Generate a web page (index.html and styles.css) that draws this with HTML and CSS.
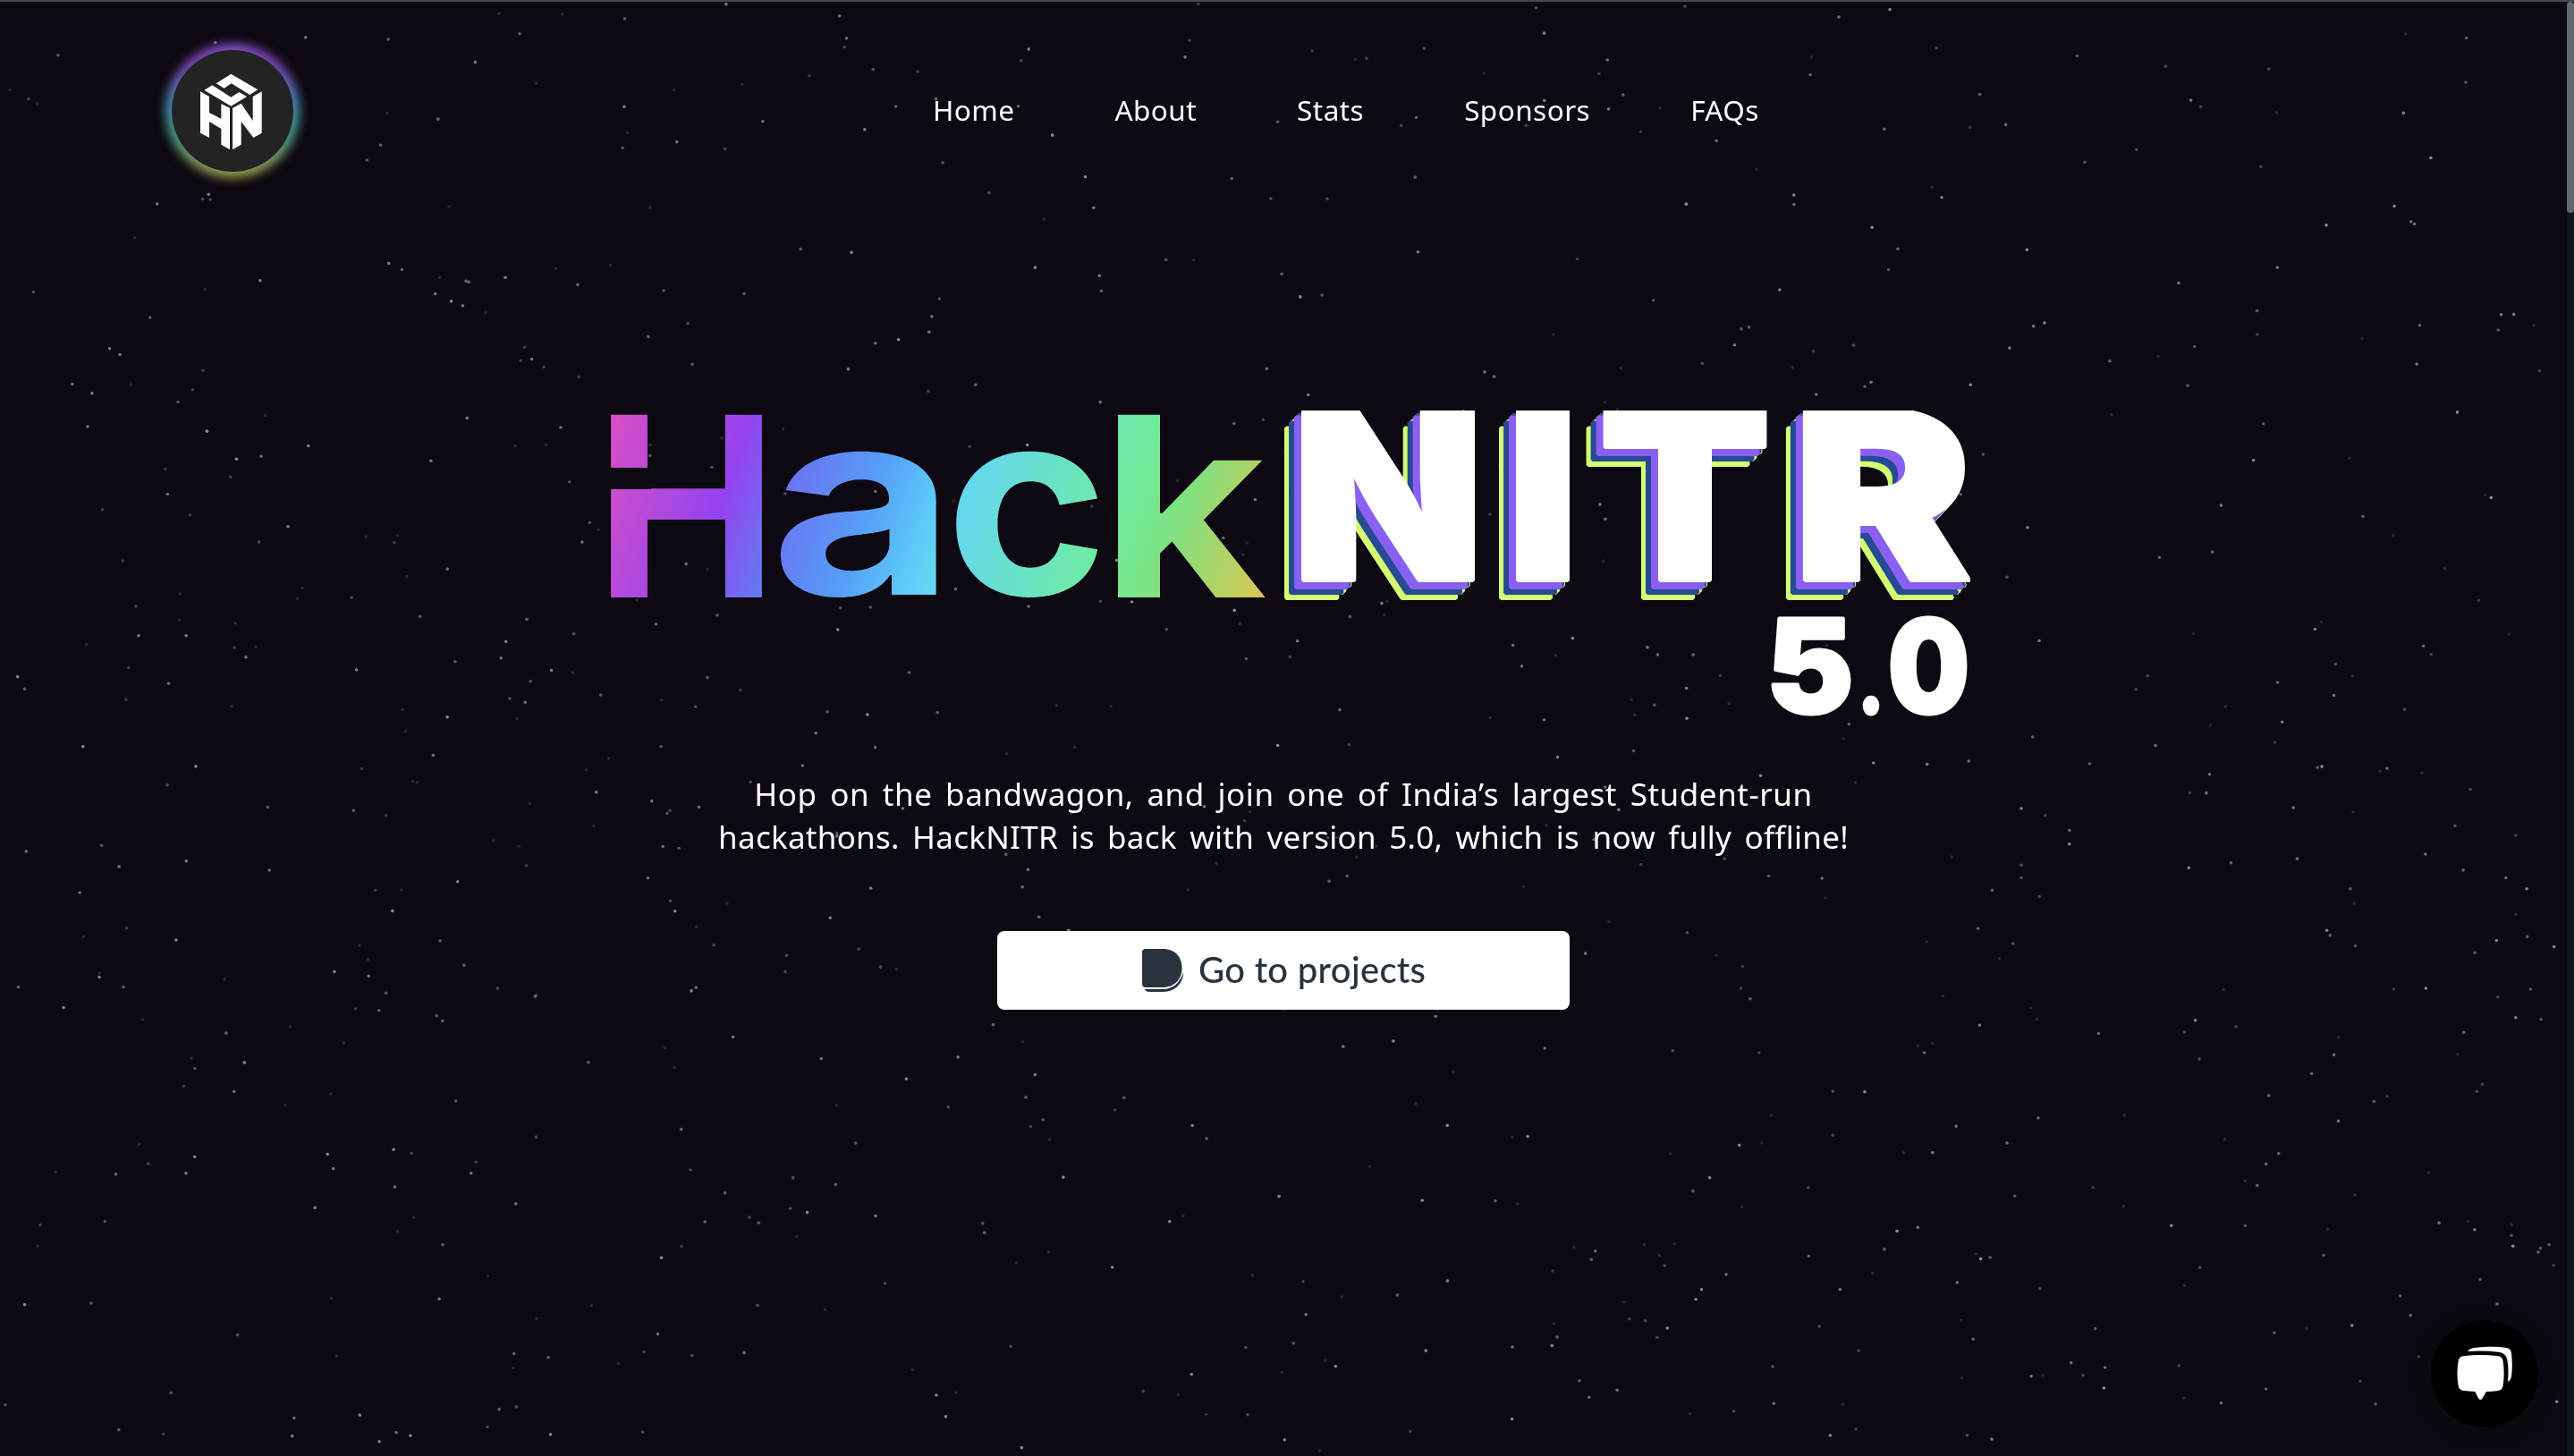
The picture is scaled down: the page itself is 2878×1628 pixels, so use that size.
FILE: index.html
```html
<!DOCTYPE html>
<html lang="en">
<head>
<meta charset="utf-8">
<title>HackNITR 5.0</title>
<link rel="stylesheet" href="styles.css">
</head>
<body>
<canvas class="stars" id="stars" width="2870" height="1628" aria-hidden="true"></canvas>
<div class="page">
  <header class="header">
    <a class="brand" href="#home" aria-label="HackNITR">
      <svg viewBox="96 78 408 408" fill="#fff">
        <path d="M295 158 385 211 358 228 296 190 272 206 245 190Z"/>
        <path d="M232 196 295 236 322 219 348 234 295 266 205 212Z"/>
        <path d="M192 217 222 234V288L262 308V258L291 272V412L262 395V342L222 318V372L192 356Z"/>
        <path d="M300 272 329 257 368 315V234L398 217V356L370 372 329 318V395L300 412Z"/>
      </svg>
    </a>
    <nav class="nav">
      <a href="#home">Home</a>
      <a href="#about">About</a>
      <a href="#stats">Stats</a>
      <a href="#sponsors">Sponsors</a>
      <a href="#faqs">FAQs</a>
    </nav>
  </header>

  <main class="hero">
    <svg class="wordmark" viewBox="667 450 1536 360" role="img" aria-label="HackNITR 5.0">
      <defs>
        <linearGradient id="rainbow" gradientUnits="userSpaceOnUse" x1="683" y1="464" x2="1393" y2="712">
          <stop offset="0" stop-color="#d850c6"/>
          <stop offset=".2" stop-color="#9343ef"/>
          <stop offset=".28" stop-color="#6b72f3"/>
          <stop offset=".41" stop-color="#569ff7"/>
          <stop offset=".5" stop-color="#5ecdf8"/>
          <stop offset=".54" stop-color="#64d8ee"/>
          <stop offset=".7" stop-color="#6ce6b5"/>
          <stop offset=".76" stop-color="#6eeca0"/>
          <stop offset=".84" stop-color="#7ee283"/>
          <stop offset=".91" stop-color="#a3d66e"/>
          <stop offset="1" stop-color="#d8c853"/>
        </linearGradient>
        <clipPath id="crop"><rect x="1430" y="459" width="773" height="213"/></clipPath>
      </defs>
      <g class="hack" fill="url(#rainbow)">
        <text x="665" y="668" font-size="280.6" textLength="205" lengthAdjust="spacingAndGlyphs">H</text>
        <text x="861" y="665" font-size="290" textLength="208" lengthAdjust="spacingAndGlyphs">a</text>
        <text x="1057" y="665" font-size="290" textLength="182" lengthAdjust="spacingAndGlyphs">c</text>
        <text x="1230" y="668" font-size="280.6" textLength="186" lengthAdjust="spacingAndGlyphs">k</text>
      </g>
      <rect class="notch" x="676" y="523" width="52" height="24"/>
      <g clip-path="url(#crop)">
        <g class="nitr">
          <text x="1444" y="649" textLength="216" lengthAdjust="spacingAndGlyphs">N</text>
          <text x="1684" y="649" textLength="82" lengthAdjust="spacingAndGlyphs">I</text>
          <text x="1787" y="649" textLength="194" lengthAdjust="spacingAndGlyphs">T</text>
          <text x="2004" y="649" textLength="202" lengthAdjust="spacingAndGlyphs">R</text>
        </g>
      </g>
      <g class="version">
        <text x="1974.5" y="798" font-size="147" textLength="98.5" lengthAdjust="spacingAndGlyphs">5</text>
        <text x="2077" y="798" font-size="100" textLength="30" lengthAdjust="spacingAndGlyphs">.</text>
        <text x="2110.5" y="798" font-size="147" textLength="92" lengthAdjust="spacingAndGlyphs">0</text>
      </g>
    </svg>

    <p class="tagline">
      <span>Hop on the bandwagon, and join one of India’s largest Student-run</span>
      <span class="second">hackathons. HackNITR is back with version 5.0, which is now fully offline!</span>
    </p>

    <a class="cta" href="#projects">
      <svg viewBox="0 0 46 48" fill="#29333d">
        <path d="M4 0H23C38 0 44.500 10 44.500 21.500C44.500 34 36 43 23 43H4Q0 43 0 39V4Q0 0 4 0Z"/>
        <path d="M3 45H23C35 45 43 37 46 26C46.500 38 37 48 24 48H8Q4 48 3 45Z"/>
      </svg>
      <span>Go to projects</span>
    </a>
  </main>
</div>

<button class="chat" aria-label="Chat">
  <svg viewBox="54 78 360 360" fill="#fff">
    <path d="M163 199Q220 191 280 199Q294 201 296 216Q302 258 296 298Q294 313 280 315Q260 318 240 318L226 341Q220 349 214 341L202 318Q180 317 163 315Q147 312 146 298Q139 258 146 216Q148 201 163 199Z"/>
    <path d="M177 183Q185 173 200 171Q260 164 308 171Q322 174 324 188Q329 230 324 268Q322 280 312 285Q316 240 310 210Q305 190 285 186Q230 179 177 183Z"/>
  </svg>
</button>
<div class="scrollbar"><div class="thumb"></div></div>
<script src="stars.js"></script>
</body>
</html>
```
FILE: styles.css
```css
* { box-sizing: border-box; }

body {
  margin: 0;
  height: 1628px;
  overflow: hidden;
  background: #0d0811;
  border-top: 2px solid #484848;
  color: #fff;
  font-family: "Noto Sans", "Liberation Sans", sans-serif;
}

a { color: inherit; text-decoration: none; }

.stars { position: absolute; left: 0; top: 0; }

.page { position: relative; width: 2870px; }

.header {
  display: flex;
  align-items: center;
  height: 244px;
  padding-left: 192px;
}

.brand {
  position: relative;
  width: 136px;
  height: 136px;
}

.brand::before {
  content: "";
  position: absolute;
  inset: -7px;
  border-radius: 50%;
  background: linear-gradient(#8a4fd0, #7a4cbc 20%, #4a8db5 45%, #45a080 68%, #a89c4a);
  filter: blur(6px);
}

.brand svg {
  position: relative;
  display: block;
  border-radius: 50%;
  background: #232323;
}

.nav {
  display: flex;
  gap: 112px;
  margin-left: 715px;
  padding-bottom: 2px;
  font-size: 31.5px;
  line-height: 44px;
  letter-spacing: .45px;
}

.hero {
  display: flex;
  flex-direction: column;
  align-items: center;
  padding-top: 204px;
}

.wordmark { width: 1536px; height: 360px; overflow: visible; }
.hack { font-family: Inter, sans-serif; font-weight: 700; }
.notch { fill: #0d0811; }
.nitr, .version {
  font-family: Inter, sans-serif;
  font-weight: 900;
  fill: #fff;
  stroke: #fff;
  stroke-linejoin: bevel;
}
.nitr {
  font-size: 262px;
  stroke-width: 4;
  filter: drop-shadow(-8px 8px 0 #8a60f2) drop-shadow(-6px 6px 0 #264a93) drop-shadow(-5px 6px 0 #d3ff70);
}
.version { stroke-width: 3; }

.tagline {
  display: flex;
  flex-direction: column;
  align-items: center;
  margin: 54px 0 0;
  font-size: 35px;
  line-height: 48px;
  letter-spacing: .55px;
  word-spacing: 5px;
  white-space: nowrap;
}

.tagline .second { letter-spacing: .27px; }

.cta {
  display: flex;
  align-items: center;
  gap: 17px;
  width: 640px;
  height: 88px;
  margin-top: 81px;
  padding-left: 162px;
  border-radius: 8px;
  background: #fff;
  color: #29333d;
  font: 500 40px/48px Lato, sans-serif;
  letter-spacing: .3px;
}

.cta svg { width: 46px; height: 48px; }
.cta span { padding-bottom: 2px; }

.chat {
  position: absolute;
  left: 2718px;
  top: 1476px;
  width: 120px;
  height: 120px;
  padding: 0;
  border: 0;
  border-radius: 50%;
  background: #000;
  box-shadow: 0 4px 20px rgba(10, 10, 10, .7);
}

.chat svg { display: block; }

.scrollbar {
  position: absolute;
  right: 0;
  top: 2px;
  width: 8px;
  height: 1626px;
  background: #0d151c;
}

.thumb { height: 236px; border-radius: 4px; background: #616970; }
```
FILE: stars.js
```js
// Two hand-placed star clusters; each value is "x y" on a 1568 grid covering 960 x 800 px.
const upperLeft = `18 197 52 217 68 227 106 121 393 93 558 82 709 86 868 136 911 30 949 74 1027 31 1141 41 1326 9 1533 35 1546 84 1542 103
1478 166 1355 185 1231 197 979 183 1140 234 1393 266 1146 291 1137 324 1236 311 1324 326 707 248 800 261 695 318 670 351 287 447 370 436
381 426 384 437 820 453 1187 455 246 521 1462 546 1555 553 710 577 734 591 803 608 851 616 856 618 923 608 1015 588 1115 581 1055 624
1212 637 1359 644 795 644 824 660 845 670 887 685 374 634 475 615 61 640 274 696 200 764 219 777 958 761 951 791 971 787 993 804 1057 826
1184 738 1256 709 1264 798 1549 809 371 812 132 842 239 843 168 862 325 881 352 854 485 911 160 935 378 945 853 916 563 977 941 977 997 975
1024 937 1187 975 1187 998 1318 960 1300 1024 1430 940 432 1006 477 1000 302 1028 421 1045 306 1083 187 1117 347 1129 526 1154 473 1188
787 1010 1040 1056 1077 1145 1093 1161 1063 1188 726 1174 720 1189 668 1176 224 1229 817 1247 743 1264 552 1289 543 1312 642 1310 329 1301
248 1329 328 1359 430 1366 340 1393 253 1393 158 1412 428 1419 467 1417 449 1440 235 1463 308 1498 32 1483 45 1510 230 1533 423 1548
767 1351 962 1357 1048 1389 924 1406 915 1442 831 1450 651 1468 1007 1469 1046 1474 969 1493 931 1531 959 1539 1097 1523 1208 1534 1270 1549
1352 1512 1292 1485 735 1555 1163 1315 1198 1368 1310 1348 1253 1236 1292 1247 1535 1332 1530 1380 1511 1560 1434 1082`;
const lowerRight = `833 11 1051 4 318 49 416 52 492 45 713 51 112 77 285 92 932 74 1129 59 1137 57 1243 67 1256 61 1320 71 1408 107 896 115 926 115
588 149 632 164 1085 147 1194 157 676 197 676 227 1380 187 1491 208 1326 249 461 255 588 273 588 301 46 259 127 297 224 302 230 345 535 328
621 342 894 279 971 268 1092 259 1189 325 1196 357 1395 284 1473 301 1511 325 1491 381 509 412 415 441 573 445 548 478 31 471 79 495 1146 416
1152 427 1198 450 1456 438 1512 430 1416 465 1561 452 76 543 93 566 445 560 605 586 617 611 512 624 957 546 906 613 980 627 886 639 729 642
1268 545 1327 543 1458 562 1518 545 1491 607 1537 611 1396 640 1385 688 1167 650 1159 689 1118 730 913 698 399 669 426 664 411 684 109 684
244 769 302 770 131 822 244 865 73 887 114 882 469 845 619 827 562 882 373 903 426 903 776 821 960 874 1040 778 1058 905 1035 928 1167 834
1232 791 1256 780 1420 769 1430 753 1332 947 997 965 1019 975 1197 996 1147 1071 997 1063 862 1063 775 1021 719 980 576 998 199 980 19 958
78 1022 361 1075 399 1067 338 1115 200 1130 49 1170 4 1203 257 1203 316 1168 505 1125 514 1136 531 1133 622 1201 471 1188 914 1155 886 1194
1140 1128 1351 1057 1404 1054 1416 1072 1483 1061 1483 1085 1486 1108 1552 1105 1536 1113 1532 1121 1560 1150 1426 1181 1280 1217 1299 1260
1457 1235 1192 1282 1109 1289 1050 1298 723 1289 478 1270 500 1312 219 1284 291 1337 134 1372 679 1364 741 1374 701 1391 739 1419 606 1393
627 1391 479 1397 876 1370 885 1441 953 1452 1035 1421 1207 1404 1314 1350 1235 1454 1566 1449 262 1455 136 1453 63 1470 239 1523 286 1509
489 1523 534 1531`;

const ctx = document.getElementById("stars").getContext("2d");
let seed = 20;
const random = () => (seed = (seed * 16807) % 2147483647) / 2147483647;

function star(x, y) {
  const level = random();
  ctx.globalAlpha = level < .25 ? .13 : .2 + .34 * random();
  ctx.fillStyle = "#fff";
  ctx.beginPath();
  ctx.arc(x, y, 1.8, 0, Math.PI * 2);
  ctx.fill();
}

function cluster(data, left, top) {
  const n = data.trim().split(/\s+/).map(Number);
  for (let i = 0; i < n.length; i += 2) star(left + n[i] * 960 / 1568, top + n[i + 1] * 800 / 1568);
}

cluster(upperLeft, 0, 0);
cluster(lowerRight, 1900, 828);

for (let i = 0; i < 850; i++) {
  const x = random() * 2868, y = 3 + random() * 1623;
  if ((x < 960 && y < 800) || (x > 1900 && y > 828)) continue;
  star(x, y);
}
```
